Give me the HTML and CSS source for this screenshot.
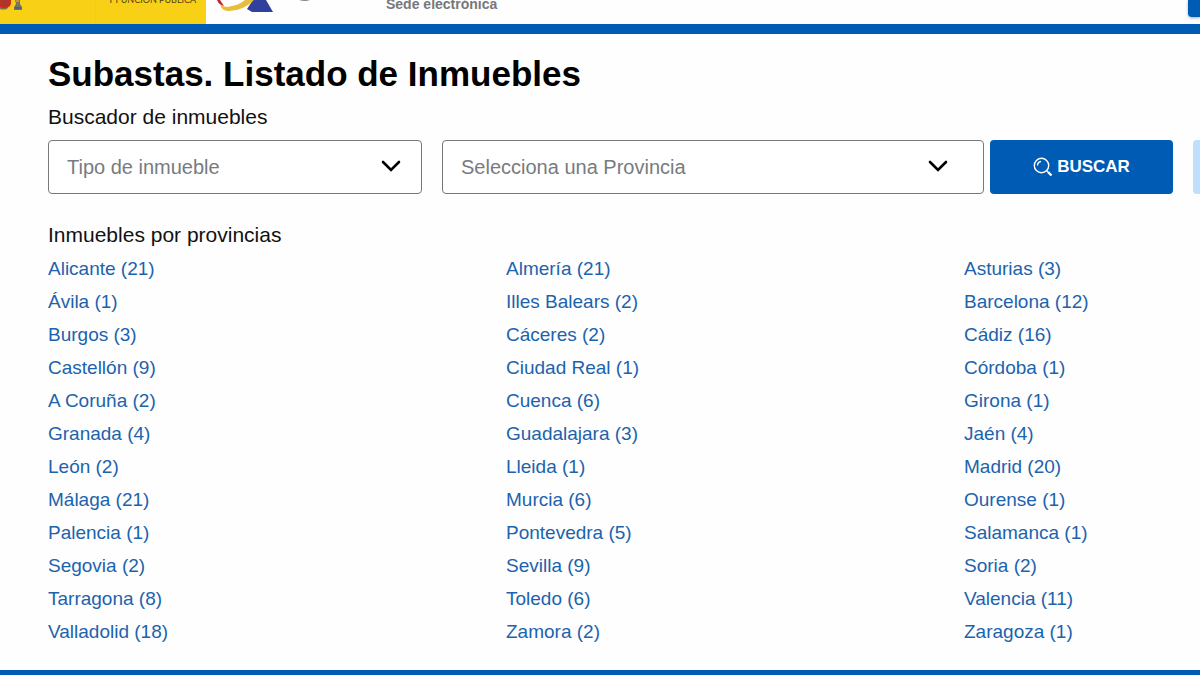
FILE: index.html
```html
<!DOCTYPE html>
<html lang="es">
<head>
<meta charset="utf-8">
<title>Subastas. Listado de Inmuebles</title>
<link rel="stylesheet" href="styles.css">
</head>
<body>
<header class="header">
  <div class="ministry">
    <div class="ministry-arms">
      <svg class="arms" viewBox="0 0 24 12" aria-hidden="true">
        <path d="M0 0H11Q12 8 4 9L0 8Z" fill="#c62f1c"/>
        <path d="M2 0H8V5Q5 7 2 5Z" fill="#a33a2c"/>
        <path d="M0 7Q4 9 8 7L7 9Q3 10 0 9Z" fill="#8a6a4a"/>
        <path d="M15 0H20V4L22 7V10H14V7L16 4Z" fill="#77755f"/>
        <path d="M15 7H21V9H15Z" fill="#4f6277"/>
        <path d="M16 0H19V2H16Z" fill="#c8933a"/>
      </svg>
    </div>
    <span class="ministry-name">Y FUNCIÓN PÚBLICA</span>
  </div>
  <svg class="agency-logo" viewBox="0 0 96 12" aria-hidden="true">
    <path d="M0 0H3L7 6L4 5Q1 3 0 0Z" fill="#c8202f"/>
    <path d="M36 0H49L56 12H35L30 9Z" fill="#30409c"/>
    <path d="M3 4Q7 8 13 6.500Q22 5 28 0H37Q26 11 12 11Q6 11 4 7Z" fill="#e8bd3c"/>
    <path d="M82 0H93Q88 2 82 0Z" fill="#85868a"/>
  </svg>
  <span class="site-name">Sede electrónica</span>
  <button class="header-action" type="button" aria-label="Acceder"></button>
</header>

<main class="content">
  <h1 class="title">Subastas. Listado de Inmuebles</h1>
  <h2 class="subtitle">Buscador de inmuebles</h2>
  <form class="search">
    <div class="field field-type">
      <select class="select" aria-label="Tipo de inmueble"><option>Tipo de inmueble</option></select>
      <svg class="chevron" viewBox="0 0 20 12" aria-hidden="true"><path d="M2 2L10 10L18 2"/></svg>
    </div>
    <div class="field field-province">
      <select class="select" aria-label="Provincia"><option>Selecciona una Provincia</option></select>
      <svg class="chevron" viewBox="0 0 20 12" aria-hidden="true"><path d="M2 2L10 10L18 2"/></svg>
    </div>
    <button class="submit" type="button">
      <svg class="lens" viewBox="0 0 20 20" aria-hidden="true"><circle cx="8.5" cy="8.5" r="7.2"/><path d="M4.500 8.500Q4.700 5 8 4.500M13.500 13.500L15 15"/><path class="handle" d="M15 15L18.500 18.500"/></svg>
      BUSCAR
    </button>
    <button class="clear" type="button" aria-label="Limpiar"></button>
  </form>

  <h2 class="subtitle list-title">Inmuebles por provincias</h2>
  <ul class="provinces">
    <li><a href="#">Alicante (21)</a></li><li><a href="#">Almería (21)</a></li><li><a href="#">Asturias (3)</a></li>
    <li><a href="#">Ávila (1)</a></li><li><a href="#">Illes Balears (2)</a></li><li><a href="#">Barcelona (12)</a></li>
    <li><a href="#">Burgos (3)</a></li><li><a href="#">Cáceres (2)</a></li><li><a href="#">Cádiz (16)</a></li>
    <li><a href="#">Castellón (9)</a></li><li><a href="#">Ciudad Real (1)</a></li><li><a href="#">Córdoba (1)</a></li>
    <li><a href="#">A Coruña (2)</a></li><li><a href="#">Cuenca (6)</a></li><li><a href="#">Girona (1)</a></li>
    <li><a href="#">Granada (4)</a></li><li><a href="#">Guadalajara (3)</a></li><li><a href="#">Jaén (4)</a></li>
    <li><a href="#">León (2)</a></li><li><a href="#">Lleida (1)</a></li><li><a href="#">Madrid (20)</a></li>
    <li><a href="#">Málaga (21)</a></li><li><a href="#">Murcia (6)</a></li><li><a href="#">Ourense (1)</a></li>
    <li><a href="#">Palencia (1)</a></li><li><a href="#">Pontevedra (5)</a></li><li><a href="#">Salamanca (1)</a></li>
    <li><a href="#">Segovia (2)</a></li><li><a href="#">Sevilla (9)</a></li><li><a href="#">Soria (2)</a></li>
    <li><a href="#">Tarragona (8)</a></li><li><a href="#">Toledo (6)</a></li><li><a href="#">Valencia (11)</a></li>
    <li><a href="#">Valladolid (18)</a></li><li><a href="#">Zamora (2)</a></li><li><a href="#">Zaragoza (1)</a></li>
  </ul>
</main>
<footer class="footer"></footer>
</body>
</html>
```
FILE: styles.css
```css
* { box-sizing: border-box; }

body {
  margin: 0;
  background: #fefefe;
  color: #111;
  font-family: "Liberation Sans", Arial, sans-serif;
  overflow-x: hidden;
}

.header {
  display: flex;
  height: 34px;
  border-bottom: 10px solid #005bb5;
  overflow: hidden;
}

.ministry {
  display: flex;
  flex: none;
  width: 206px;
  background: #f8d117;
}

.ministry-arms {
  width: 96px;
  border-right: 1px solid #f3cb1a;
}

.arms {
  display: block;
  width: 24px;
  height: 12px;
}

.ministry-name {
  align-self: flex-end;
  padding: 0 0 18px 12px;
  color: #4d430f;
  font: 9px/12px Lato, sans-serif;
  white-space: nowrap;
}

.agency-logo {
  flex: none;
  width: 96px;
  height: 12px;
  margin-left: 11px;
}

.site-name {
  align-self: flex-end;
  margin-left: 73px;
  padding-bottom: 12px;
  color: #77787b;
  font-size: 14px;
  font-weight: bold;
  line-height: 16px;
}

.header-action {
  width: 12px;
  height: 17px;
  margin-left: auto;
  padding: 0;
  border: 0;
  border-radius: 0 0 0 4px;
  background: #005bb5;
  box-shadow: 0 1px 3px #0005;
}

.content { padding: 18px 0 22px 48px; }

.title {
  margin: 0;
  color: #000;
  font-size: 35px;
  line-height: 44px;
}

.subtitle {
  margin: 6px 0 8px;
  font-size: 21px;
  font-weight: normal;
  line-height: 30px;
}

.search {
  display: flex;
  height: 54px;
}

.field {
  position: relative;
  min-width: 0;
}

.field-type {
  flex: 374 1 0;
  margin-right: 20px;
}

.field-province {
  flex: 542 1 0;
  margin-right: 6px;
}

.select {
  width: 100%;
  height: 100%;
  padding: 0 18px;
  border: 1px solid #77787b;
  border-radius: 4px;
  background: #fff;
  color: #777b80;
  font: 20px/24px "Liberation Sans", Arial, sans-serif;
  appearance: none;
}

.chevron {
  position: absolute;
  top: 20px;
  right: 21px;
  width: 20px;
  height: 12px;
  fill: none;
  stroke: #000;
  stroke-width: 2.6;
  stroke-linecap: round;
  pointer-events: none;
}

.field-province .chevron { right: 36px; }

.submit {
  display: flex;
  flex: none;
  align-items: center;
  justify-content: center;
  gap: 4px;
  width: 183px;
  margin-right: 20px;
  border: 0;
  border-radius: 4px;
  background: #005bb5;
  color: #fff;
  font: bold 17px/24px "Liberation Sans", Arial, sans-serif;
}

.lens {
  width: 20px;
  height: 20px;
  fill: none;
  stroke: #fff;
  stroke-width: 1.4;
}

.lens .handle { stroke-width: 2.4; }

.clear {
  flex: none;
  width: 7px;
  padding: 0;
  border: 0;
  border-radius: 4px 0 0 4px;
  background: #bfdfff;
}

.list-title { margin: 26px 0 2px; }

.provinces {
  display: grid;
  grid-template-columns: 458fr 458fr 236fr;
  margin: 0;
  padding: 0;
  list-style: none;
  font-size: 19px;
  line-height: 33px;
}

.provinces a {
  color: #1c63ad;
  text-decoration: none;
}

.footer {
  height: 5px;
  background: #005bb5;
}
```
